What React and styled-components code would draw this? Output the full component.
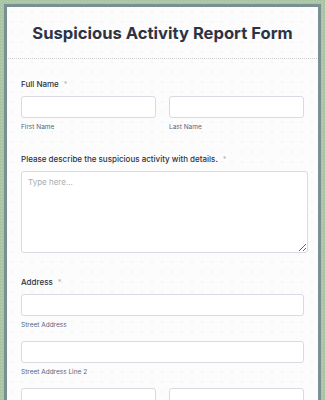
import React from "react";
import styled, { createGlobalStyle } from "styled-components";

const GlobalStyle = createGlobalStyle`
  html, body {
    margin: 0;
    padding: 0;
    height: 100%;
    overflow: hidden;
  }
  body {
    background-color: #a9c6a4;
    background-image: radial-gradient(rgba(255, 255, 255, 0.25) 0.6px, transparent 0.8px);
    background-size: 3px 3px;
    font-family: Inter, "Noto Sans", sans-serif;
  }
`;

const Card = styled.section`
  margin: 4px 4px 0;
  border: 3px solid #7b8e93;
  border-bottom: none;
  background-color: #fcfcfc;
  background-image: radial-gradient(#ececec 0.6px, transparent 0.8px);
  background-size: 10px 10px;
  min-height: 400px;
`;

const Header = styled.header`
  height: 51px;
  display: flex;
  align-items: center;
  justify-content: center;
  border-bottom: 1px dotted #cfcfcf;
  margin: 0 1px;

  h1 {
    margin: 0;
    font-size: 16.6px;
    font-weight: 700;
    color: #2c3345;
  }
`;

const Body = styled.div`
  padding: 20px 14px 0;
`;

const Field = styled.div`
  margin-bottom: ${(p) => p.gap || 0}px;
`;

const Label = styled.label`
  display: block;
  font-size: 8px;
  line-height: 10px;
  font-weight: 500;
  color: #2c3345;
  margin-bottom: 6px;

  span {
    color: #b4b6bb;
    margin-left: 5px;
    font-size: 7px;
  }
`;

const Row = styled.div`
  display: grid;
  grid-template-columns: ${(p) => (p.split ? "1fr 1fr" : "1fr")};
  column-gap: 13px;
`;

const Input = styled.input`
  box-sizing: border-box;
  display: block;
  width: 100%;
  height: 22px;
  border: 1px solid #d8dbe1;
  border-radius: 3px;
  background: #fff;
`;

const Sub = styled.div`
  font-size: 6.5px;
  line-height: 8px;
  color: #57647e;
  margin-top: 5px;
  margin-bottom: ${(p) => p.gap || 0}px;
`;

const TextArea = styled.textarea`
  box-sizing: border-box;
  display: block;
  width: calc(100% + 4px);
  height: 82px;
  border: 1px solid #d8dbe1;
  border-radius: 3px;
  background: #fff;
  padding: 5px 6px;
  font-family: Inter, "Noto Sans", sans-serif;
  font-size: 8px;
  resize: vertical;

  &::placeholder {
    color: #a7adb7;
  }
`;

export default function App() {
  return (
    <>
      <GlobalStyle />
      <Card>
        <Header>
          <h1>Suspicious Activity Report Form</h1>
        </Header>
        <Body>
          <Field gap={23}>
            <Label>
              Full Name<span>*</span>
            </Label>
            <Row split>
              <div>
                <Input />
                <Sub>First Name</Sub>
              </div>
              <div>
                <Input />
                <Sub>Last Name</Sub>
              </div>
            </Row>
          </Field>
          <Field gap={24}>
            <Label>
              Please describe the suspicious activity with details.<span>*</span>
            </Label>
            <TextArea placeholder="Type here..." />
          </Field>
          <Field>
            <Label>
              Address<span>*</span>
            </Label>
            <Input />
            <Sub gap={12}>Street Address</Sub>
            <Input />
            <Sub gap={12}>Street Address Line 2</Sub>
            <Row split>
              <Input />
              <Input />
            </Row>
          </Field>
        </Body>
      </Card>
    </>
  );
}
